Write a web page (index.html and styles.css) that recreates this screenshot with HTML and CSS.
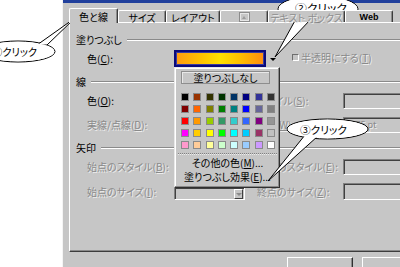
FILE: index.html
```html
<!DOCTYPE html>
<html lang="ja">
<head>
<meta charset="utf-8">
<title>色と線</title>
<link rel="stylesheet" href="styles.css">
</head>
<body>
<div class="dialog">
  <div class="titlebar"></div>
  <div class="tabs">
    <div class="tab active t1">色と線</div>
    <div class="tab t2">サイズ</div>
    <div class="tab t3">レイアウト</div>
    <div class="tab t4 off"><svg class="pic" width="11" height="10" viewBox="0 0 11 10"><rect x="0.5" y="0.5" width="10" height="9" fill="none" stroke="#8c8c8c"/><rect x="1.5" y="1.5" width="8" height="7" fill="none" stroke="#e6e6e6"/><path d="M3 7 L5 4 L7 7 Z" fill="#9a9a9a"/></svg></div>
    <div class="tab t5 off">テキスト ボックス</div>
    <div class="tab t6 web">Web</div>
  </div>
  <div class="panel">
    <div class="group g1"><span>塗りつぶし</span><i class="rule"></i></div>
    <div class="row r-fill">
      <span class="lbl">色(<u>C</u>):</span>
      <div class="color-combo"><div class="well"></div><div class="drop"><span class="tri"></span></div></div>
      <div class="check off"><span class="cbox"></span><span>半透明にする(<u>T</u>)</span></div>
    </div>
    <div class="group g2"><span>線</span><i class="rule"></i></div>
    <div class="row r-color">
      <span class="lbl">色(<u>O</u>):</span>
      <div class="field lf"></div>
      <span class="lbl off">スタイル(<u>S</u>):</span>
      <div class="field rf"></div>
    </div>
    <div class="row r-dash">
      <span class="lbl off">実線/点線(<u>D</u>):</span>
      <div class="field lf"></div>
      <span class="lbl off">太さ(<u>W</u>):</span>
      <div class="field rf"><span class="val off">0.75 pt</span></div>
    </div>
    <div class="group g3"><span>矢印</span><i class="rule"></i></div>
    <div class="row r-bstyle">
      <span class="lbl off">始点のスタイル(<u>B</u>):</span>
      <div class="field lf"></div>
      <span class="lbl off">終点のスタイル(<u>E</u>):</span>
      <div class="field rf"></div>
    </div>
    <div class="row r-bsize">
      <span class="lbl off">始点のサイズ(<u>I</u>):</span>
      <div class="field lf small"><span class="arr"><span class="tri gray"></span></span></div>
      <span class="lbl off">終点のサイズ(<u>Z</u>):</span>
      <div class="field rf"></div>
    </div>
  </div>
  <div class="buttons">
    <div class="btn">OK</div>
    <div class="btn">キャンセル</div>
  </div>
</div>

<div class="popup">
  <div class="nofill">塗りつぶしなし</div>
  <div class="swatches">
    <i style="background:#000000"></i><i style="background:#993300"></i><i style="background:#333300"></i><i style="background:#003300"></i><i style="background:#003366"></i><i style="background:#000080"></i><i style="background:#333399"></i><i style="background:#333333"></i>
    <i style="background:#800000"></i><i style="background:#ff6600"></i><i style="background:#808000"></i><i style="background:#008000"></i><i style="background:#008080"></i><i style="background:#0000ff"></i><i style="background:#666699"></i><i style="background:#808080"></i>
    <i style="background:#ff0000"></i><i style="background:#ff9900"></i><i style="background:#99cc00"></i><i style="background:#339966"></i><i style="background:#33cccc"></i><i style="background:#3366ff"></i><i style="background:#800080"></i><i style="background:#969696"></i>
    <i style="background:#ff00ff"></i><i style="background:#ffcc00"></i><i style="background:#ffff00"></i><i style="background:#00ff00"></i><i style="background:#00ffff"></i><i style="background:#00ccff"></i><i style="background:#993366"></i><i style="background:#c0c0c0"></i>
    <i style="background:#ff99cc"></i><i style="background:#ffcc99"></i><i style="background:#ffff99"></i><i style="background:#ccffcc"></i><i style="background:#ccffff"></i><i style="background:#99ccff"></i><i style="background:#cc99ff"></i><i style="background:#ffffff"></i>
  </div>
  <div class="sep"></div>
  <div class="item">その他の色(<u>M</u>)...</div>
  <div class="item">塗りつぶし効果(<u>E</u>)...</div>
</div>

<svg class="callouts" width="400" height="267" viewBox="0 0 400 267">
  <g class="co">
    <ellipse cx="18" cy="51.5" rx="37" ry="10.5"/>
    <polygon points="37,45 75,18 47,45"/>
    <ellipse class="cover" cx="18" cy="51.5" rx="36.3" ry="9.8"/>
    <text x="-8" y="56" textLength="45" lengthAdjust="spacingAndGlyphs">①クリック</text>
  </g>
  <g class="co">
    <ellipse cx="318" cy="9" rx="40" ry="13"/>
    <polygon points="297,17 275,57 311,19"/>
    <ellipse class="cover" cx="318" cy="9" rx="39.3" ry="12.3"/>
    <text x="295" y="12" textLength="52" lengthAdjust="spacingAndGlyphs">②クリック</text>
  </g>
  <g class="co">
    <ellipse cx="327.5" cy="129" rx="40.5" ry="10"/>
    <polygon points="305,135 268,181 318,136"/>
    <ellipse class="cover" cx="327.5" cy="129" rx="39.8" ry="9.3"/>
    <text x="300" y="134" textLength="47" lengthAdjust="spacingAndGlyphs">③クリック</text>
  </g>
</svg>
</body>
</html>
```

FILE: styles.css
```css
* { box-sizing: border-box; }

html, body {
  margin: 0;
  padding: 0;
}

body {
  width: 400px;
  height: 267px;
  overflow: hidden;
  position: relative;
  background: #ffffff;
  font-family: "Noto Sans CJK JP", "Noto Sans", sans-serif;
  font-size: 10px;
  font-feature-settings: "palt";
  color: #000;
}

u { text-decoration: underline; text-underline-offset: 1px; }

.dialog {
  margin-left: 62px;
  width: 380px;
  height: 267px;
  background: #c6c6c6;
  border-left: 1px solid #f4f4f4;
}

.titlebar {
  height: 3px;
  background: #21409c;
}

/* tabs */
.tabs {
  position: relative;
  z-index: 1;
  display: flex;
  align-items: flex-end;
  height: 19px;
  padding-left: 6px;
}

.tab {
  height: 12px;
  padding-top: 1px;
  border-top: 1px solid #ffffff;
  border-left: 1px solid #ffffff;
  border-right: 1px solid #3c3c3c;
  box-shadow: inset -1px 0 #8a8a8a;
  border-radius: 2px 2px 0 0;
  background: #c6c6c6;
  display: flex;
  align-items: center;
  justify-content: center;
  line-height: 11px;
  white-space: nowrap;
}

.tab.active {
  height: 15px;
  margin-bottom: -1px;
  padding-top: 1px;
}

.t1 { width: 49px; }
.t2 { width: 48px; }
.t3 { width: 54px; }
.t4 { width: 48px; }
.t5 { width: 77px; }
.t6 { width: 48px; }

.tab.off { color: #8e8e8e; text-shadow: 1px 1px 0 #ececec; }
.tab.web { font-family: "Liberation Sans", Arial, sans-serif; font-weight: bold; font-size: 9px; }
.pic { display: block; }

/* panel */
.panel {
  margin-left: 6px;
  height: 230px;
  border-top: 1px solid #ffffff;
  border-left: 1px solid #ffffff;
  border-bottom: 1px solid #3c3c3c;
  box-shadow: inset 0 -1px #8a8a8a;
}

.group {
  display: flex;
  align-items: center;
  height: 12px;
  padding-left: 6px;
  line-height: 12px;
}

.rule {
  flex: 1;
  height: 2px;
  margin-left: 5px;
  border-top: 1px solid #8a8a8a;
  border-bottom: 1px solid #ffffff;
}

.g1 { margin-top: 11px; }
.g2 { margin-top: 9px; }
.g3 { margin-top: 9px; }

.row {
  display: grid;
  grid-template-columns: 87px 83px 86px 1fr;
  align-items: center;
  padding-left: 17px;
  line-height: 12px;
}

.r-fill { margin-top: 4px; height: 17px; display: flex; }
.r-color { margin-top: 5px; height: 16px; }
.r-dash { margin-top: 8px; height: 16px; }
.r-bstyle { margin-top: 5px; height: 16px; }
.r-bsize { margin-top: 8px; height: 17px; }

.lbl { white-space: nowrap; }
.r-fill .lbl { width: 87px; }

.off { color: #8a8a8a; text-shadow: 1px 1px 0 #ededed; }

.color-combo {
  display: flex;
  width: 105px;
  height: 17px;
}

.well {
  width: 92px;
  height: 17px;
  border: 2px solid #0a0a7a;
  box-shadow: inset 0 0 0 1px #3a3aa0;
  background: linear-gradient(to right, #ff9a10 0%, #ffc400 30%, #ffe000 50%, #ffc000 72%, #ff8c10 100%);
}

.drop {
  width: 13px;
  display: flex;
  align-items: center;
  justify-content: center;
  padding-top: 1px;
}

.tri {
  width: 0;
  height: 0;
  border-left: 3px solid transparent;
  border-right: 3px solid transparent;
  border-top: 3px solid #000;
}

.tri.gray { border-top-color: #8a8a8a; }

.check {
  display: flex;
  align-items: center;
  margin-left: 13px;
  padding-bottom: 2px;
  white-space: nowrap;
}

.cbox {
  width: 7px;
  height: 7px;
  margin-right: 2px;
  border: 1px solid;
  border-color: #6e6e6e #ffffff #ffffff #6e6e6e;
  background: #c6c6c6;
}

.field {
  height: 16px;
  border: 1px solid;
  border-color: #808080 #ffffff #ffffff #808080;
  box-shadow: inset 1px 1px #404040;
  background: #c6c6c6;
}

.lf { width: 71px; }
.rf { width: 70px; padding-left: 4px; display: flex; align-items: center; }
.r-bsize .rf { height: 17px; }

.field.small {
  height: 13px;
  margin-top: 4px;
  display: flex;
  justify-content: flex-end;
  padding: 1px;
}

.arr {
  width: 9px;
  height: 10px;
  border: 1px solid;
  border-color: #ffffff #404040 #404040 #ffffff;
  display: flex;
  align-items: center;
  justify-content: center;
}

.val { font-size: 9px; }

/* buttons */
.buttons {
  display: flex;
  gap: 9px;
  padding-left: 224px;
  margin-top: 5px;
}

.btn {
  width: 66px;
  height: 23px;
  border: 1px solid;
  border-color: #ffffff #303030 #303030 #ffffff;
  box-shadow: inset -1px -1px #8a8a8a;
  display: flex;
  align-items: center;
  justify-content: center;
  padding-top: 6px;
}

/* popup color menu */
.popup {
  position: absolute;
  left: 174px;
  top: 67px;
  width: 106px;
  height: 121px;
  background: #c6c6c6;
  border: 1px solid;
  border-color: #e8e8e8 #303030 #303030 #e8e8e8;
  box-shadow: inset -1px -1px #8a8a8a, inset 1px 1px #ffffff;
  padding: 3px 0 0 6px;
}

.nofill {
  width: 89px;
  height: 13px;
  border: 1px solid #8e8e8e;
  box-shadow: inset 1px 1px #e8e8e8;
  text-align: center;
  line-height: 11px;
}

.swatches {
  display: grid;
  grid-template-columns: repeat(8, 8px);
  grid-auto-rows: 8px;
  column-gap: 4.3px;
  row-gap: 4px;
  margin-top: 9px;
}

.swatches i {
  display: block;
  border: 1px solid #8a8a8a;
}

.sep {
  width: 99px;
  margin-left: -3px;
  margin-top: 4px;
  border-top: 1px dotted #808080;
  border-bottom: 1px dotted #ececec;
}

.item {
  height: 14px;
  line-height: 14px;
  text-align: center;
  width: 93px;
}

.sep + .item { margin-top: 1px; }

/* callouts */
.callouts {
  position: absolute;
  left: 0;
  top: 0;
  pointer-events: none;
}

.co ellipse, .co polygon {
  fill: #ffffff;
  stroke: #000000;
  stroke-width: 1;
}

.co ellipse.cover {
  stroke: none;
}

.co text {
  font-family: "Noto Sans CJK JP", sans-serif;
  font-size: 10.5px;
  fill: #000;
}
```
